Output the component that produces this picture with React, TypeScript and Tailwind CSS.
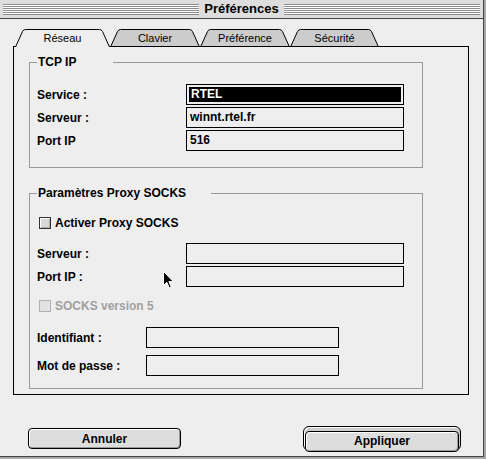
import React from "react";

const tabs = [
  { label: "Réseau", w: 95, cls: "w-[95px]", active: true },
  { label: "Clavier", w: 90, cls: "w-[90px]", active: false },
  { label: "Préférence", w: 90, cls: "w-[90px]", active: false },
  { label: "Sécurité", w: 89, cls: "w-[89px]", active: false },
];

function Tab({ label, w, cls, active }: { label: string; w: number; cls: string; active: boolean }) {
  const d = `M0.5 18 L7.5 2.5 Q8.5 0.5 10.5 0.5 L${w - 10.5} 0.5 Q${w - 8.5} 0.5 ${w - 7.5} 2.5 L${w - 0.5} 18`;
  return (
    <div className={`relative h-[18px] flex justify-center pt-[3px] text-[11px] leading-[13px] ${cls} ${active ? "z-10" : ""}`}>
      <svg className="absolute inset-0" width={w} height={18}>
        <path d={d} fill={active ? "#eeeeee" : "#cccccc"} stroke="#000" strokeWidth={1} />
        {!active && <line x1={0} y1={17.5} x2={w} y2={17.5} stroke="#000" strokeWidth={1} />}
      </svg>
      <span className="relative">{label}</span>
    </div>
  );
}

function Stripes() {
  return (
    <div className="flex-1 flex flex-col gap-px bg-white">
      {[0, 1, 2, 3, 4, 5].map((i) => (
        <div key={i} className="h-px bg-[#8c8c8c]" />
      ))}
    </div>
  );
}

function Group({ title, titleW, children, bodyCls }: { title: string; titleW: string; children: React.ReactNode; bodyCls: string }) {
  return (
    <div className="w-[394px] flex flex-col">
      <div className="flex h-[14px]">
        <div className="w-[8px] mt-[7px] border-t border-l border-[#999999]" />
        <div className={`${titleW} pl-px text-[12px] font-bold leading-[14px]`}>{title}</div>
        <div className="flex-1 mt-[7px] border-t border-r border-[#999999]" />
      </div>
      <div className={`border-l border-r border-b border-[#999999] flex flex-col pl-[7px] ${bodyCls}`}>
        {children}
      </div>
    </div>
  );
}

function Field({ label, labelW, fieldW, value, selected }: { label: string; labelW: string; fieldW: string; value?: string; selected?: boolean }) {
  return (
    <div className="flex items-center h-[21px]">
      <div className={`${labelW} text-[12px] font-bold`}>{label}</div>
      {selected ? (
        <div className={`${fieldW} h-[21px] border border-black p-[2px]`}>
          <div className="h-full bg-black text-white text-[12px] font-bold leading-[15px] pl-[2px]">{value}</div>
        </div>
      ) : (
        <div className={`${fieldW} h-[21px] border border-black pl-[3px] text-[12px] font-bold leading-[19px]`}>{value}</div>
      )}
    </div>
  );
}

function Checkbox({ label, disabled }: { label: string; disabled?: boolean }) {
  return (
    <div className="flex items-center h-[14px] pl-[2px] gap-[4px]">
      <div
        className={`w-[12px] h-[12px] border ${
          disabled
            ? "border-[#b0b0b0] bg-[#e2e2e2]"
            : "border-[#333333] bg-[#d8d8d8] shadow-[inset_1px_1px_0_#ffffff,inset_-1px_-1px_0_#aaaaaa]"
        }`}
      />
      <span className={`text-[12px] font-bold ${disabled ? "text-[#a0a0a0]" : "text-black"}`}>{label}</span>
    </div>
  );
}

export default function App() {
  return (
    <div className="w-[486px] h-[459px] bg-[#a8a8a8] relative font-['Liberation_Sans',Arial,sans-serif] text-black">
      <div className="w-[484px] h-[457px] border-r border-b border-[#444444] bg-[#eeeeee] flex flex-col">
        {/* Title bar */}
        <div className="h-[19px] flex items-center px-[3px] bg-[#dddddd] border-b border-[#444444]">
          <Stripes />
          <div className="px-[5px] text-[13px] font-bold leading-[16px]">Préférences</div>
          <Stripes />
        </div>

        {/* Tabs */}
        <div className="flex pl-[15px] mt-[10px] -mb-px relative z-10">
          {tabs.map((t) => (
            <Tab key={t.label} {...t} />
          ))}
        </div>

        {/* Tab panel */}
        <div className="w-[456px] ml-[13px] border border-black pt-[8px] pb-[5px] pl-[15px] flex flex-col">
          <Group title="TCP IP" titleW="w-[76px]" bodyCls="pt-[15px] pb-[16px] gap-[2px]">
            <Field label="Service :" labelW="w-[149px]" fieldW="w-[218px]" value="RTEL" selected />
            <Field label="Serveur :" labelW="w-[149px]" fieldW="w-[218px]" value="winnt.rtel.fr" />
            <Field label="Port IP" labelW="w-[149px]" fieldW="w-[218px]" value="516" />
          </Group>

          <div className="mt-[18px]">
            <Group title="Paramètres Proxy SOCKS" titleW="w-[174px]" bodyCls="pt-[16px] pb-[12px]">
              <Checkbox label="Activer Proxy SOCKS" />
              <div className="mt-[13px] flex flex-col gap-[2px]">
                <Field label="Serveur :" labelW="w-[149px]" fieldW="w-[218px]" />
                <Field label="Port IP :" labelW="w-[149px]" fieldW="w-[218px]" />
              </div>
              <div className="mt-[12px]">
                <Checkbox label="SOCKS version 5" disabled />
              </div>
              <div className="mt-[14px] flex flex-col gap-[7px]">
                <Field label="Identifiant :" labelW="w-[109px]" fieldW="w-[193px]" />
                <Field label="Mot de passe :" labelW="w-[109px]" fieldW="w-[193px]" />
              </div>
            </Group>
          </div>
        </div>

        {/* Buttons */}
        <div className="mt-[31px] h-[25px] flex items-center justify-between pl-[28px] pr-[22px]">
          <button className="w-[153px] h-[21px] rounded-[4px] border border-black bg-[#dddddd] shadow-[inset_1px_1px_0_#ffffff,inset_-1px_-1px_0_#999999] text-[12px] font-bold">
            Annuler
          </button>
          <div className="w-[158px] h-[25px] rounded-[6px] border border-black bg-[#cccccc] p-px shadow-[inset_1px_1px_0_#ffffff]">
            <button className="w-full h-full rounded-[4px] border border-black bg-[#dddddd] shadow-[inset_1px_1px_0_#ffffff,inset_-1px_-1px_0_#999999] text-[12px] font-bold">
              Appliquer
            </button>
          </div>
        </div>
      </div>

      {/* Mouse pointer */}
      <svg className="absolute left-[163px] top-[271px]" width={12} height={18} viewBox="0 0 12 18">
        <path d="M0.5 0.5 L0.5 14.5 L3.8 11.3 L6.3 16.8 L8.3 15.9 L5.9 10.6 L10.3 10.6 Z" fill="#000" stroke="#fff" strokeWidth={1} />
      </svg>
    </div>
  );
}
